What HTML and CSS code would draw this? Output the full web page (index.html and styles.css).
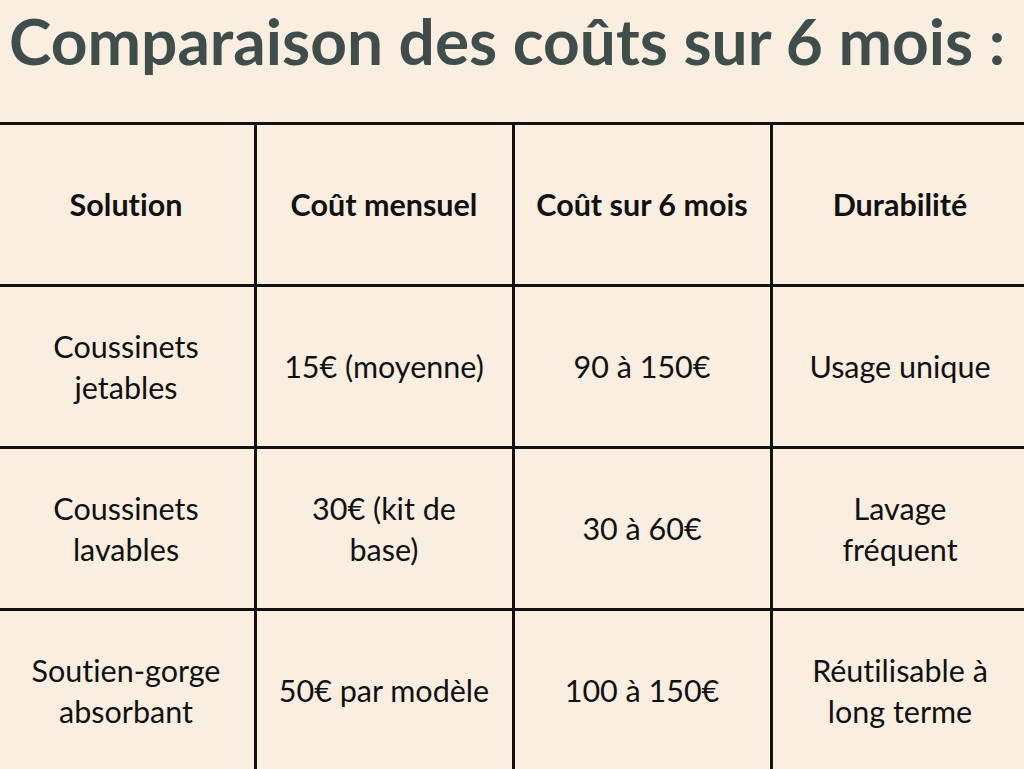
FILE: index.html
```html
<!DOCTYPE html>
<html lang="fr">
<head>
<meta charset="utf-8">
<title>Comparaison des coûts</title>
<link rel="stylesheet" href="styles.css">
</head>
<body>
<h1 class="title">Comparaison des coûts sur 6 mois :</h1>
<table class="costs">
  <thead>
    <tr>
      <th>Solution</th>
      <th>Coût mensuel</th>
      <th>Coût sur 6 mois</th>
      <th>Durabilité</th>
    </tr>
  </thead>
  <tbody>
    <tr>
      <td>Coussinets<br>jetables</td>
      <td>15€ (moyenne)</td>
      <td>90 à 150€</td>
      <td>Usage unique</td>
    </tr>
    <tr>
      <td>Coussinets<br>lavables</td>
      <td>30€ (kit de<br>base)</td>
      <td>30 à 60€</td>
      <td>Lavage<br>fréquent</td>
    </tr>
    <tr>
      <td>Soutien-gorge<br>absorbant</td>
      <td>50€ par modèle</td>
      <td>100 à 150€</td>
      <td>Réutilisable à<br>long terme</td>
    </tr>
  </tbody>
</table>
</body>
</html>
```
FILE: styles.css
```css
html, body {
  margin: 0;
  padding: 0;
  background: #faeee0;
  overflow: hidden;
}
body {
  width: 1024px;
  height: 769px;
  font-family: Lato, "Noto Sans", sans-serif;
  font-variant-ligatures: none;
  font-feature-settings: "liga" 0, "dlig" 0;
}
.title {
  margin: 0;
  padding: 0 0 0 9px;
  height: 122px;
  font-size: 64px;
  line-height: 82px;
  font-weight: 700;
  color: #3f4e4c;
  white-space: nowrap;
}
.costs {
  border-collapse: collapse;
  table-layout: fixed;
  width: 1035px;
  margin-left: -4.5px;
}
.costs th,
.costs td {
  border: 3px solid #111;
  width: 255px;
  height: 159px;
  padding: 0;
  text-align: center;
  vertical-align: middle;
  color: #111;
  font-size: 30.5px;
  line-height: 41px;
}
.costs th {
  font-weight: 700;
}
.costs td {
  font-weight: 400;
}
```
